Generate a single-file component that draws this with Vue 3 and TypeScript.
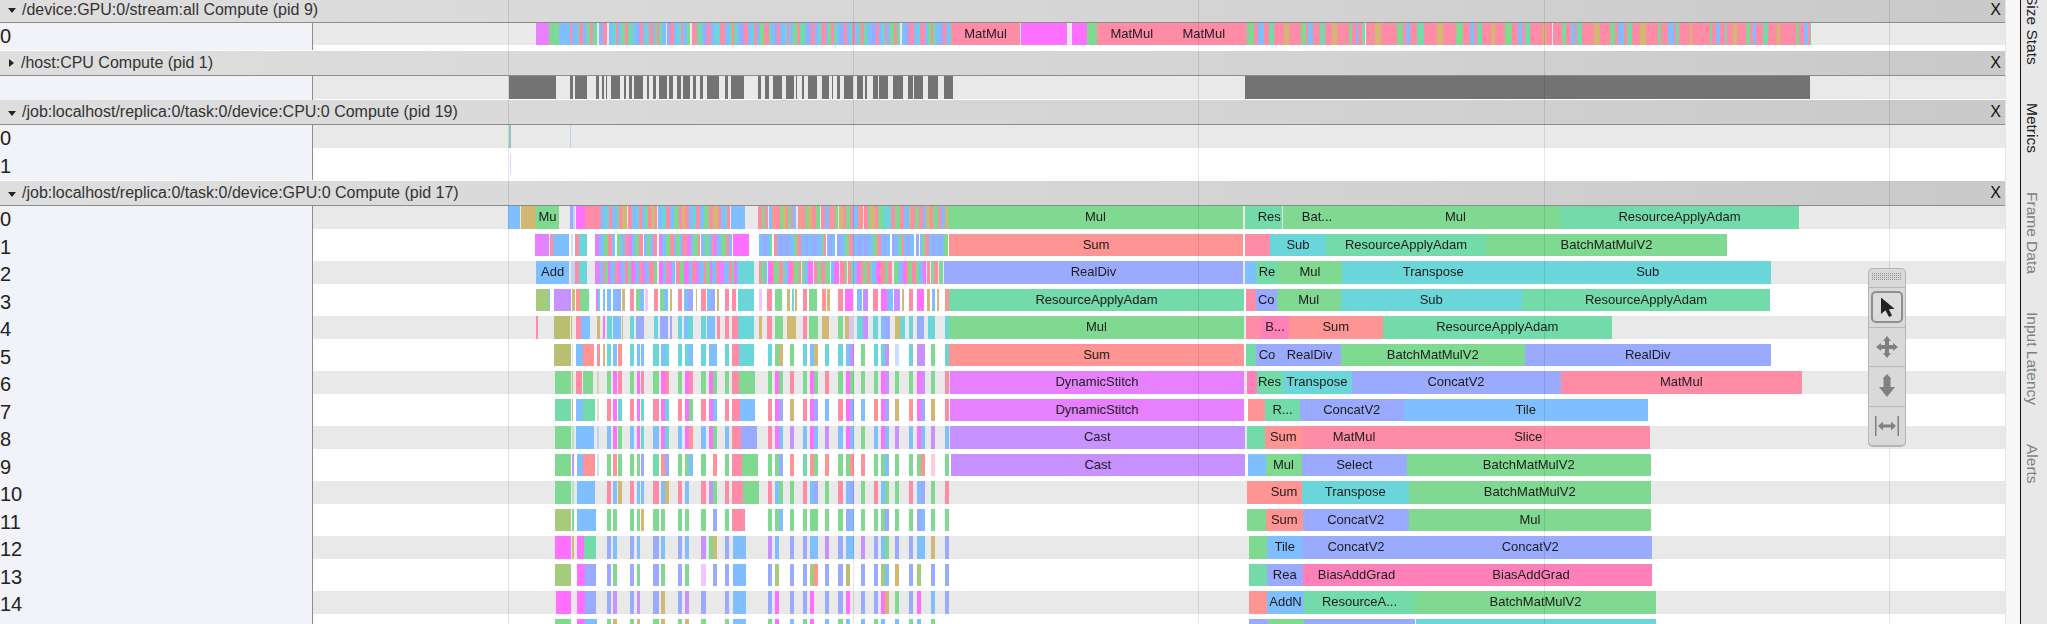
<template>
  <div class="page">
    <div class="timeline">
      <section v-for="sec in sections" :key="sec.title" class="process">
        <header class="proc-head">
          <span class="caret" :class="{ closed: sec.collapsed }"></span>
          <span class="proc-title">{{ sec.title }}</span>
          <span class="proc-close">X</span>
        </header>
        <div class="rows" :class="{ 'rows-closed': sec.collapsed }">
          <div v-for="(row, i) in sec.rows" :key="i" class="row">
            <div class="row-label">{{ sec.collapsed ? '' : i }}</div>
            <div class="track">
              <div class="band" :class="{ on: i % 2 === 0 }"></div>
              <div
                v-for="(s, j) in row"
                :key="j"
                class="slice"
                :class="['c-' + s.c.toLowerCase(), { pale: s.c !== s.c.toLowerCase() }]"
                :style="{ left: s.x - TRACK_X + 'px', width: s.w + 'px' }"
              >{{ s.label }}</div>
            </div>
          </div>
        </div>
      </section>

      <i v-for="x in gridLines" :key="x" class="grid-line" :style="{ left: x + 'px' }"></i>

      <div class="toolbar">
        <div class="grip"></div>
        <button class="tool">
          <span class="tool-on">
            <svg width="22" height="24" viewBox="0 0 22 24">
              <path d="M5 2.500 L5 19 L9.500 15.200 L13 22 L16 20.500 L12.800 14.200 L18.500 13.800 Z" fill="#222" />
            </svg>
          </span>
        </button>
        <button class="tool">
          <svg width="26" height="26" viewBox="0 0 26 26" fill="#808080">
            <path d="M13 2 L17 7 L15 7 L15 11 L19 11 L19 9 L24 13 L19 17 L19 15 L15 15 L15 19 L17 19 L13 24 L9 19 L11 19 L11 15 L7 15 L7 17 L2 13 L7 9 L7 11 L11 11 L11 7 L9 7 Z" />
          </svg>
        </button>
        <button class="tool">
          <svg width="22" height="26" viewBox="0 0 22 26" fill="#808080">
            <path d="M11 1 L15.500 6 L14.500 6 L14.500 14 L19 14 L11 24 L3 14 L7.500 14 L7.500 6 L6.500 6 Z" />
          </svg>
        </button>
        <button class="tool">
          <svg width="28" height="24" viewBox="0 0 28 24" fill="#808080">
            <rect x="2" y="2" width="1.500" height="20" />
            <rect x="24.500" y="2" width="1.500" height="20" />
            <path d="M5 12 L10 7.500 L10 10.500 L18 10.500 L18 7.500 L23 12 L18 16.500 L18 13.500 L10 13.500 L10 16.500 Z" />
          </svg>
        </button>
      </div>
    </div>

    <div class="gutter"></div>

    <nav class="tabs">
      <span v-for="t in tabs" :key="t.name" class="tab" :class="{ off: t.off }">{{ t.name }}</span>
    </nav>
  </div>
</template>

<script setup lang="ts">
interface Slice {
  x: number
  w: number
  c: string
  label?: string
}

interface Section {
  title: string
  collapsed?: boolean
  rows: Slice[][]
}

const TRACK_X = 313
const gridLines = [508, 853, 1198, 1544, 1889]
const tabs = [
  { name: 'Size Stats', off: false },
  { name: 'Metrics', off: false },
  { name: 'Frame Data', off: true },
  { name: 'Input Latency', off: true },
  { name: 'Alerts', off: true },
]

// small repeatable noise for the very dense stripe regions
let seed = 17
function rnd() {
  seed = (seed * 16807) % 2147483647
  return seed / 2147483647
}

function stripes(from: number, to: number, colors: string, min: number, max: number, gapEvery = 0.12): Slice[] {
  const out: Slice[] = []
  let x = from
  let n = 0
  while (x < to) {
    const w = Math.min(min + rnd() * (max - min), to - x)
    out.push({ x, w, c: colors[n % colors.length] })
    x += w
    if (rnd() < gapEvery) x += 0.7 + rnd()
    n++
  }
  return out
}

// dense spec: coordinates are crop px (3x, crop starting at x = 500)
const cx = (px: number) => 500 + px / 3

function parseDense(spec: string): Slice[] {
  const out: Slice[] = []
  for (const tok of spec.trim().split(/\s+/)) {
    if (tok.startsWith('~')) {
      const m = tok.match(/^~(\d+)-(\d+):(\w+)$/)
      if (m) out.push(...stripes(cx(+m[1]), cx(+m[2]), m[3], 2, 5))
      continue
    }
    const m = tok.match(/^(\d+)-(\d+)([a-zA-Z])(?::(.+))?$/)
    if (m) out.push({ x: cx(+m[1]), w: (+m[2] - +m[1]) / 3, c: m[3], label: m[4] })
  }
  return out
}

// the op columns that repeat down rows 5 and below
const columns: [number, number][] = [
  [320, 332], [340, 365], [390, 402], [410, 433], [460, 476], [484, 507], [535, 547], [555, 578],
  [603, 617], [627, 650], [676, 688], [803, 816], [826, 849], [869, 881], [909, 922], [930, 955],
  [975, 987], [1015, 1028], [1038, 1062], [1082, 1094], [1121, 1135], [1144, 1167], [1186, 1198],
  [1228, 1240], [1250, 1274], [1293, 1306], [1335, 1347],
]

function parseColumns(spec: string): Slice[] {
  const out: Slice[] = []
  spec.trim().split(/\s+/).forEach((tok, i) => {
    const [a, b] = columns[i]
    if (tok.length === 1) {
      if (tok !== '.') out.push({ x: cx(a), w: (b - a) / 3, c: tok })
      return
    }
    const mid = (a + b) / 2
    if (tok[0] !== '.') out.push({ x: cx(a), w: (mid - a) / 3, c: tok[0] })
    if (tok[1] !== '.') out.push({ x: cx(mid), w: (b - mid) / 3, c: tok[1] })
  })
  return out
}

function parseTail(spec: string): Slice[] {
  return spec.split(';').map((part) => {
    const [a, b, c, label] = part.split(',')
    return { x: +a, w: +b - +a, c, label }
  })
}

const gpuRows: [string, string, string][] = [
  [
    '25-61b 63-107o 107-178g:Mu 210-218i 218-225B 228-255f 255-293k ~295-698:kbtkbgko 698-736b ~775-1148:kgkbrkgo 1148-1172t ~1172-1345:kgkbo',
    '',
    '948,1243,g,Mul;1245,1257,m;1257,1281.5,m,Res;1283,1351,g,Bat...;1351,1560,g,Mul;1560,1799,m,ResourceApplyAdam',
  ],
  [
    '106-147v 150-158k 160-208b 212-220B 225-238k 238-262t ~285-698:vbgkbgbk 698-746f ~776-1345:bibgkbi',
    '',
    '949,1243,r,Sum;1245,1252,k;1252,1270,k;1270,1326,t,Sub;1326,1486,m,ResourceApplyAdam;1486,1727,g,BatchMatMulV2',
  ],
  [
    '108-208b:Add 212-225B 226-238k 238-262t ~285-715:vbkgfbk 715-762t ~776-1330:kgbfkg',
    '',
    '944,1243,i,RealDiv;1245,1256,b;1256,1278,m,Re;1278,1342,g,Mul;1342,1524.5,t,Transpose;1524.5,1771,t,Sub',
  ],
  [
    '108-146n 146-148b 163-213l 215-225o 227-241r 241-267g 289-294v 294-299t 309-316b 320-332b 338-350b 350-362i 366-375o 390-402k 408-420g 420-432b 436-443V 462-474k 480-492g 492-505b 510-517o 533-545k 552-565b 565-578i 587-592o 603-617k 620-632b 632-645i 650-658o 675-688k 696-708k 715-762t 778-786V 802-816k 826-845g 860-870o 875-882t 884-890o 908-922k 928-952g 966-978r 980-990o 1015-1028k 1036-1058f 1070-1085b 1088-1105l 1120-1135k 1142-1160f 1160-1180b 1182-1200l 1205-1212o 1228-1240k 1250-1272f 1282-1290o 1295-1305b 1310-1318o 1335-1347r',
    '',
    '949,1244,m,ResourceApplyAdam;1245.5,1255.5,k;1255.5,1277,i,Co;1277,1340.5,g,Mul;1340.5,1522,t,Sub;1522,1770,m,ResourceApplyAdam',
  ],
  [
    '108-113k 163-211a 213-217o 228-243k 244-270b 291-299o 309-316f 320-335t 338-362b 366-370o 390-402t 408-432i 462-474t 480-505i 510-517i 535-547t 552-565b 565-578t 603-617t 622-645b 650-660k 675-688k 696-715k 715-762t 778-786o 802-816k 826-848g 860-888o 908-922k 928-955g 966-988o 1015-1028g 1036-1048o 1048-1058L 1070-1090t 1090-1105l 1120-1135t 1142-1156b 1156-1170i 1185-1200o 1200-1215t 1228-1240t 1250-1272i 1285-1305t 1335-1347t',
    '',
    '949,1244,g,Mul;1245.5,1261,k;1261,1289,h,B...;1289,1382.5,r,Sum;1382.5,1612,m,ResourceApplyAdam',
  ],
  [
    '163-212a 215-219B 229-249b 249-282r 291-299k 309-316o 696-716k 716-762t',
    't br t bb t bt t tb t bb t t go g t bo t t bl g t tl B t ll g t',
    '949,1244,r,Sum;1246,1256,m;1256,1278,i,Co;1278,1341,i,RealDiv;1341,1524.5,g,BatchMatMulV2;1524.5,1771,i,RealDiv',
  ],
  [
    '165-212g 215-220o 229-247k 248-280g 291-297A 696-716k 718-765g',
    'g fk g fk g fk g fk g fg g g fg k g fg k g fg g g fl g g fl g k',
    '950,1244,v,DynamicStitch;1247,1256.5,h;1256.5,1282.5,m,Res;1282.5,1351.5,t,Transpose;1351.5,1560.5,i,ConcatV2;1560.5,1802,k,MatMul',
  ],
  [
    '165-212m 216-220o 229-249b 250-284m 291-297A 696-720k 720-765b',
    'k ft k ft k ft k fg k fb k k fi o k fi b k fi b r fi o r fi o k',
    '950,1244,v,DynamicStitch;1247.5,1265,r;1265,1300,m,R...;1300,1403.5,i,ConcatV2;1403.5,1648,b,Tile',
  ],
  [
    '165-213g 215-222G 229-249b 249-281b 291-296B 696-724k 724-772i',
    'b fg b ft b ft b fr b fg b k fb l b fb l b fb g b fb l b fb l b',
    '950,1244.5,l,Cast;1247,1265,m;1265,1301.5,r,Sum;1301.5,1406.5,k,MatMul;1406.5,1650,k,Slice',
  ],
  [
    '165-213g 215-222l 230-250b 250-285r 291-297B 696-726k 726-775g',
    'g rg g gi m ri g gb g .r g g gi r m rg r g gr r g gb g g gr K g',
    '951,1244.5,l,Cast;1247.5,1265.5,b;1265.5,1301.5,g,Mul;1301.5,1407,i,Select;1407,1650.5,g,BatchMatMulV2',
  ],
  [
    '165-212g 215-222G 230-250b 250-286b 696-730k 730-778g',
    'k bo k bb k bo k b. k lg k k bg g k bi g k bi g k bg g k bi g k',
    '1247,1266,r;1266,1302,r,Sum;1302,1408.5,t,Transpose;1408.5,1651,g,BatchMatMulV2',
  ],
  [
    '165-213n 215-222g 230-252b 252-287b 696-736k',
    'g g. g go g g. g g. g .i g g gb g g gg g g ib g g gi g g ib g g',
    '1247,1266,g;1266,1302.5,r,Sum;1302.5,1409,i,ConcatV2;1409,1651,g,Mul',
  ],
  [
    '165-213f 215-222o 230-252f 252-287m 698-737b',
    'i b. i b. i b. i b. l go i l b. i i bb l i bb l i bg i i bb o i',
    '1248.5,1266.5,g;1266.5,1303,b,Tile;1303,1409,i,ConcatV2;1409,1651.5,i,ConcatV2',
  ],
  [
    '165-213n 230-254f 254-289i 698-738b',
    'i g. i g. i g. i g. V .i i i n. i i nr i i a. i i nb o i n. i i',
    '1249,1266.5,m;1266.5,1303,i,Rea;1303,1410,h,BiasAddGrad;1410,1652,h,BiasAddGrad',
  ],
  [
    '167-213f 230-254f 254-289i 698-738b',
    'i l. i l. i o. i l. i .. i i f. i i f. i i f. i i fo g i f. b i',
    '1249,1267,r;1267,1304,b,AddN;1304,1415,m,ResourceA...;1415,1656,g,BatchMatMulV2',
  ],
  [
    '165-214g 230-254f 254-292b 698-738b',
    'g o. g o. g o. g o. g .. g g f. b g f. b g b. b g b. b g b. g .',
    '1249,1267.5,i;1267.5,1304,g,Re;1304,1415,i,AddN;1416,1656,t,Transpose',
  ],
]

const computeRow: Slice[] = [
  ...parseTail('536,549,v;549,559,g;559,570,b'),
  ...stripes(570, 950.7, 'kbtkbgkmbi', 2, 5, 0.03),
  ...parseTail('950.7,1020.5,k,MatMul;1020.5,1067,f;1072,1087,f;1087,1097,g;1097,1166.5,k,MatMul;1166.5,1241,k,MatMul'),
  ...stripes(1241, 1811, 'kkgkbkmkkok', 2, 7, 0.02),
]

// gray bars of the host row, crop px at 3x from x = 530
const hostBars = '0-78 120-130 135-170 197-208 215-222 228-232 243-270 282-287 297-305 312-340 352-358 368-378 388-412 416-428 442-452 460-480 490-498 510-520 530-567 585-595 603-643 685-693 705-716 728-755 768-793 798-802 815-823 835-860 875-897 905-908 922-930 942-968 980-1000 1005-1010 1028-1045 1048-1075 1090-1118 1135-1148 1152-1180 1193-1225 1242-1268'
const hostRow: Slice[] = [
  { x: 509, w: 21, c: 'x' },
  ...hostBars.split(' ').map((p) => {
    const [a, b] = p.split('-').map(Number)
    return { x: 530 + a / 3, w: (b - a) / 3, c: 'x' }
  }),
  { x: 1244.6, w: 565.4, c: 'x' },
]

const sections: Section[] = [
  { title: '/device:GPU:0/stream:all Compute (pid 9)', rows: [computeRow] },
  { title: '/host:CPU Compute (pid 1)', collapsed: true, rows: [hostRow] },
  {
    title: '/job:localhost/replica:0/task:0/device:CPU:0 Compute (pid 19)',
    rows: [
      [
        { x: 508.5, w: 2, c: 'm' },
        { x: 510, w: 1.2, c: 'L' },
        { x: 569.5, w: 1.5, c: 'B' },
      ],
      [{ x: 509.8, w: 1.5, c: 'L' }],
    ],
  },
  {
    title: '/job:localhost/replica:0/task:0/device:GPU:0 Compute (pid 17)',
    rows: gpuRows.map(([dense, cols, tail]) => [
      ...parseDense(dense),
      ...(cols ? parseColumns(cols) : []),
      ...parseTail(tail),
    ]),
  },
]
</script>

<style scoped>
.page {
  display: flex;
  width: 2047px;
  height: 624px;
  overflow: hidden;
  background: #fff;
  font-family: "Liberation Sans", Arial, sans-serif;
  color: #222;
}

.timeline {
  position: relative;
  flex: 0 0 2005px;
  height: 624px;
  overflow: hidden;
}

.process:first-child {
  margin-top: -2.3px;
}

.proc-head {
  display: flex;
  align-items: center;
  height: 25px;
  box-sizing: border-box;
  border-bottom: 1px solid #8c8c8c;
  background: linear-gradient(to right, #dedede, #d4d4d4 60%, #c9c9c9);
  font-size: 16px;
  color: #333;
}

.caret {
  flex: none;
  width: 0;
  height: 0;
  margin: 2px 6px 0 8px;
  border-left: 4px solid transparent;
  border-right: 4px solid transparent;
  border-top: 5px solid #222;
}

.caret.closed {
  margin: 0 7px 0 9px;
  border-top: 4px solid transparent;
  border-bottom: 4px solid transparent;
  border-left: 5px solid #222;
  border-right: 0;
}

.proc-title {
  flex: 1;
  white-space: nowrap;
}

.proc-close {
  flex: none;
  padding-right: 4px;
  color: #111;
}

.rows {
  padding-bottom: 1px;
}

.rows-closed {
  padding-bottom: 0;
}

.row {
  display: flex;
  height: 27.5px;
}

.rows-closed .row {
  height: 24px;
}

.row-label {
  flex: 0 0 313px;
  box-sizing: border-box;
  border-right: 1px solid #8c8c8c;
  background: #f1f3f8;
  font-size: 20px;
  line-height: 27.5px;
  color: #222;
}

.track {
  position: relative;
  flex: 1;
  filter: blur(0.3px);
}

.band {
  height: 22.5px;
}

.rows-closed .band {
  height: 23px;
}

.band.on {
  background: #e9e9e9;
}

.slice {
  position: absolute;
  top: 0;
  height: 22.5px;
  overflow: hidden;
  font-size: 13px;
  line-height: 22.5px;
  text-align: center;
  white-space: nowrap;
  color: #1c1c1c;
}

.rows-closed .slice {
  height: 23px;
}

.pale {
  opacity: 0.45;
}

.c-f { background: #ff70ff; }
.c-v { background: #e680ff; }
.c-l { background: #c792ff; }
.c-b { background: #80bfff; }
.c-i { background: #99aaff; }
.c-t { background: #6ad6d9; }
.c-g { background: #80d990; }
.c-m { background: #73dbaa; }
.c-r { background: #ff9494; }
.c-k { background: #ff8ca6; }
.c-h { background: #ff80b8; }
.c-o { background: #d1b973; }
.c-a { background: #b8bf73; }
.c-n { background: #a6cc7a; }
.c-x { background: #737373; }

.grid-line {
  position: absolute;
  top: 0;
  bottom: 0;
  width: 1px;
  background: rgba(0, 0, 0, 0.1);
}

.toolbar {
  position: absolute;
  left: 1868px;
  top: 268px;
  display: flex;
  flex-direction: column;
  width: 38px;
  height: 179px;
  box-sizing: border-box;
  border: 1px solid #b4b4b4;
  border-bottom-width: 2px;
  border-radius: 5px;
  background: #d9d9d9;
}

.grip {
  position: relative;
  flex: none;
  height: 18px;
}

.grip::before {
  content: "";
  position: absolute;
  left: 3px;
  right: 3px;
  top: 4px;
  height: 7px;
  background: repeating-linear-gradient(to right, #8f8f8f 0 1px, transparent 1px 2px);
  -webkit-mask-image: repeating-linear-gradient(to bottom, #000 0 1px, transparent 1px 2px);
  mask-image: repeating-linear-gradient(to bottom, #000 0 1px, transparent 1px 2px);
}

.tool {
  flex: 1;
  display: flex;
  align-items: center;
  justify-content: center;
  margin: 0;
  padding: 0;
  border: 0;
  border-top: 1px solid #b8b8b8;
  background: transparent;
}

.tool-on {
  display: flex;
  align-items: center;
  justify-content: center;
  width: 32px;
  height: 32px;
  box-sizing: border-box;
  border: 2px solid #8f8f8f;
  border-radius: 5px;
  background: #dcdcdc;
}

.gutter {
  flex: 0 0 15px;
  box-sizing: border-box;
  border-left: 1px solid #e4e4e4;
  background: #f7f7f7;
}

.tabs {
  flex: 1;
  display: flex;
  flex-direction: column;
  align-items: center;
  gap: 38.5px;
  box-sizing: border-box;
  padding-right: 5px;
  border-left: 1px solid #111;
  background: #e8e8e8;
}

.tab {
  writing-mode: vertical-rl;
  font-size: 15.5px;
  white-space: nowrap;
  color: #222;
}

.tab:first-child {
  margin-top: -5px;
}

.tab.off {
  color: #808080;
}
</style>
